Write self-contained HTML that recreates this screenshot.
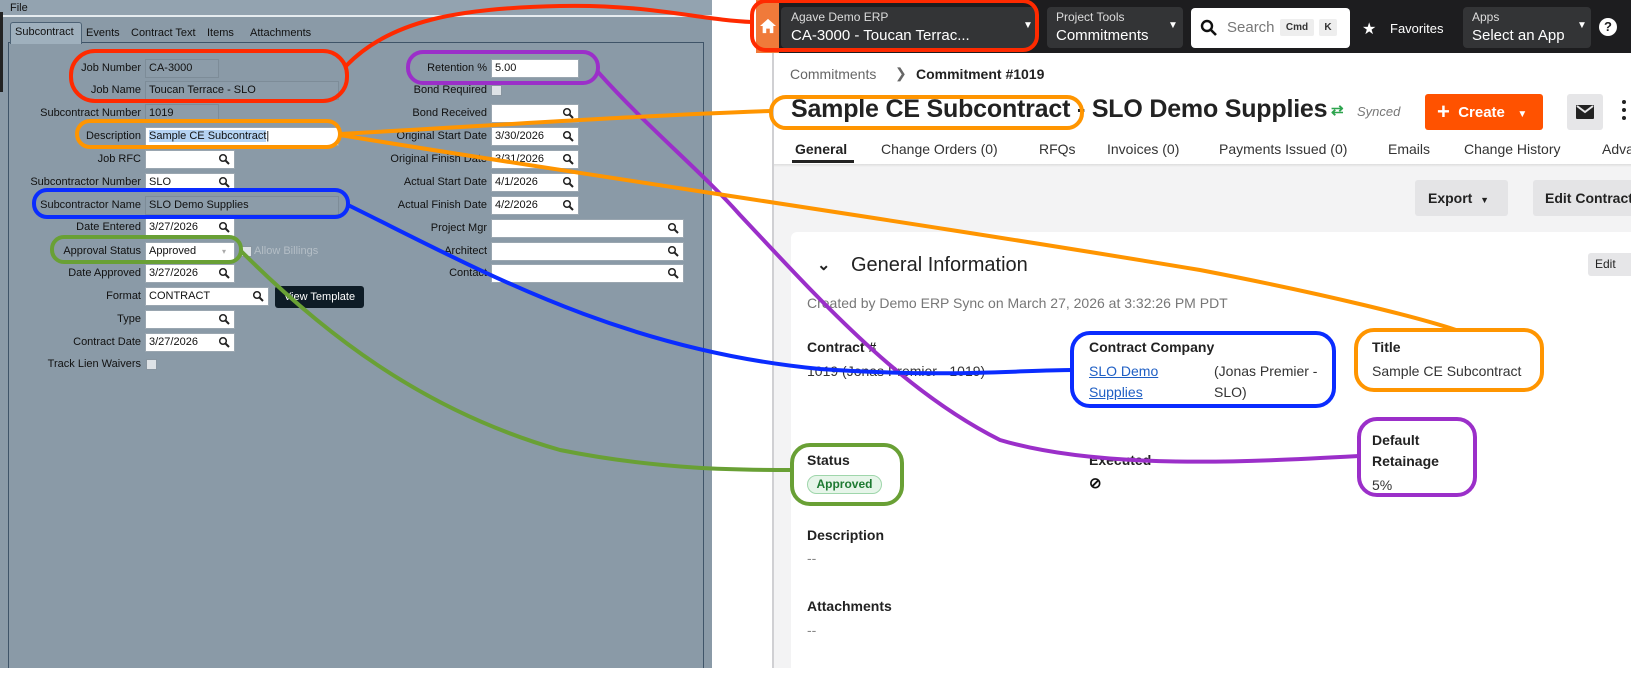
<!DOCTYPE html>
<html><head><meta charset="utf-8"><style>
*{margin:0;padding:0;box-sizing:border-box}
body{width:1631px;height:668px;overflow:hidden;position:relative;background:#fff;font-family:"Liberation Sans",sans-serif}
.a{position:absolute;white-space:nowrap}
#L{position:absolute;left:0;top:0;width:712px;height:668px;background:#8a9aa7;font-size:11px;color:#111}
#F{position:absolute;left:0;top:2px;width:712px;height:668px}
.lb{position:absolute;text-align:right;width:200px;font-size:11px;line-height:19px;color:#111}
.in{position:absolute;height:19px;background:#fff;border:1px solid #9aa6b0;font-size:11px;line-height:17px;padding-left:3px;color:#111}
.ro{background:#8c9ca9;border:1px solid #7d8c98}
.mg{position:absolute;right:4px;top:2px;width:12px;height:12px}
.cb{position:absolute;width:11px;height:11px;background:#dde2e6;border:1px solid #8895a0}
.tab{position:absolute;top:141px;font-size:14px;color:#333}
.h{font-weight:bold;font-size:14px;color:#222}
.v{font-size:14px;color:#333}
</style></head><body>
<div id="L">
 <div class="a" style="left:0;top:0;width:712px;height:17px;background:#93a3b0;border-bottom:2px solid #e6ecf0"></div>
 <div class="a" style="left:10px;top:2px;font-size:11px">File</div>
 <div class="a" style="left:0;top:12px;width:3px;height:80px;background:#222"></div>
 <div class="a" style="left:8px;top:42px;width:696px;height:626px;border:1px solid #3f5468;border-bottom:none;background:#8a9aa7"></div>
 <div class="a" style="left:10px;top:22px;width:72px;height:22px;background:#9fb0bd;border:1px solid #4d6275;border-bottom:none;border-radius:3px 3px 0 0;padding:3px 4px;font-size:11px">Subcontract</div>
 <div class="a" style="left:86px;top:27px;font-size:11px">Events</div>
 <div class="a" style="left:131px;top:27px;font-size:11px">Contract Text</div>
 <div class="a" style="left:207px;top:27px;font-size:11px">Items</div>
 <div class="a" style="left:250px;top:27px;font-size:11px">Attachments</div>
<div id="F">
 <div class="lb" style="left:-59px;top:57px">Job Number</div><div class="in ro" style="left:145px;top:57px;width:74px">CA-3000</div>
 <div class="lb" style="left:-59px;top:79px">Job Name</div><div class="in ro" style="left:145px;top:79px;width:194px">Toucan Terrace - SLO</div>
 <div class="lb" style="left:-59px;top:102px">Subcontract Number</div><div class="in ro" style="left:145px;top:102px;width:74px">1019</div>
 <div class="lb" style="left:-59px;top:125px">Description</div><div class="in" style="left:145px;top:125px;width:194px"><span style="background:#b5d3f3">Sample CE Subcontract</span>|</div>
 <div class="lb" style="left:-59px;top:148px">Job RFC</div><div class="in" style="left:145px;top:148px;width:90px">&nbsp;<svg class="mg" viewBox="0 0 12 12"><circle cx="5" cy="5" r="3.3" fill="none" stroke="#222" stroke-width="1.5"/><path d="M7.5 7.5L11 11" stroke="#222" stroke-width="2"/></svg></div>
 <div class="lb" style="left:-59px;top:171px">Subcontractor Number</div><div class="in" style="left:145px;top:171px;width:90px">SLO<svg class="mg" viewBox="0 0 12 12"><circle cx="5" cy="5" r="3.3" fill="none" stroke="#222" stroke-width="1.5"/><path d="M7.5 7.5L11 11" stroke="#222" stroke-width="2"/></svg></div>
 <div class="lb" style="left:-59px;top:194px">Subcontractor Name</div><div class="in ro" style="left:145px;top:194px;width:194px">SLO Demo Supplies</div>
 <div class="lb" style="left:-59px;top:216px">Date Entered</div><div class="in" style="left:145px;top:216px;width:90px">3/27/2026<svg class="mg" viewBox="0 0 12 12"><circle cx="5" cy="5" r="3.3" fill="none" stroke="#222" stroke-width="1.5"/><path d="M7.5 7.5L11 11" stroke="#222" stroke-width="2"/></svg></div>
 <div class="lb" style="left:-59px;top:240px">Approval Status</div><div class="in" style="left:145px;top:240px;width:90px">Approved<span class="a" style="right:8px;top:0;color:#aaa;font-size:8px">▾</span></div>
 <div class="cb" style="left:241px;top:244px"></div><div class="a" style="left:254px;top:243px;color:#b4bec6;font-size:11px">Allow Billings</div>
 <div class="lb" style="left:-59px;top:262px">Date Approved</div><div class="in" style="left:145px;top:262px;width:90px">3/27/2026<svg class="mg" viewBox="0 0 12 12"><circle cx="5" cy="5" r="3.3" fill="none" stroke="#222" stroke-width="1.5"/><path d="M7.5 7.5L11 11" stroke="#222" stroke-width="2"/></svg></div>
 <div class="lb" style="left:-59px;top:285px">Format</div><div class="in" style="left:145px;top:285px;width:124px">CONTRACT<svg class="mg" viewBox="0 0 12 12"><circle cx="5" cy="5" r="3.3" fill="none" stroke="#222" stroke-width="1.5"/><path d="M7.5 7.5L11 11" stroke="#222" stroke-width="2"/></svg></div>
 <div class="a" style="left:275px;top:284px;width:89px;height:22px;background:#0e1c26;border-radius:3px;color:#fff;font-size:11px;line-height:22px;text-align:center">View Template</div>
 <div class="lb" style="left:-59px;top:308px">Type</div><div class="in" style="left:145px;top:308px;width:90px">&nbsp;<svg class="mg" viewBox="0 0 12 12"><circle cx="5" cy="5" r="3.3" fill="none" stroke="#222" stroke-width="1.5"/><path d="M7.5 7.5L11 11" stroke="#222" stroke-width="2"/></svg></div>
 <div class="lb" style="left:-59px;top:331px">Contract Date</div><div class="in" style="left:145px;top:331px;width:90px">3/27/2026<svg class="mg" viewBox="0 0 12 12"><circle cx="5" cy="5" r="3.3" fill="none" stroke="#222" stroke-width="1.5"/><path d="M7.5 7.5L11 11" stroke="#222" stroke-width="2"/></svg></div>
 <div class="lb" style="left:-59px;top:353px">Track Lien Waivers</div><div class="cb" style="left:146px;top:357px"></div>

 <div class="lb" style="left:287px;top:57px">Retention %</div><div class="in" style="left:491px;top:57px;width:88px">5.00</div>
 <div class="lb" style="left:287px;top:79px">Bond Required</div><div class="cb" style="left:491px;top:83px"></div>
 <div class="lb" style="left:287px;top:102px">Bond Received</div><div class="in" style="left:491px;top:102px;width:88px">&nbsp;<svg class="mg" viewBox="0 0 12 12"><circle cx="5" cy="5" r="3.3" fill="none" stroke="#222" stroke-width="1.5"/><path d="M7.5 7.5L11 11" stroke="#222" stroke-width="2"/></svg></div>
 <div class="lb" style="left:287px;top:125px">Original Start Date</div><div class="in" style="left:491px;top:125px;width:88px">3/30/2026<svg class="mg" viewBox="0 0 12 12"><circle cx="5" cy="5" r="3.3" fill="none" stroke="#222" stroke-width="1.5"/><path d="M7.5 7.5L11 11" stroke="#222" stroke-width="2"/></svg></div>
 <div class="lb" style="left:287px;top:148px">Original Finish Date</div><div class="in" style="left:491px;top:148px;width:88px">3/31/2026<svg class="mg" viewBox="0 0 12 12"><circle cx="5" cy="5" r="3.3" fill="none" stroke="#222" stroke-width="1.5"/><path d="M7.5 7.5L11 11" stroke="#222" stroke-width="2"/></svg></div>
 <div class="lb" style="left:287px;top:171px">Actual Start Date</div><div class="in" style="left:491px;top:171px;width:88px">4/1/2026<svg class="mg" viewBox="0 0 12 12"><circle cx="5" cy="5" r="3.3" fill="none" stroke="#222" stroke-width="1.5"/><path d="M7.5 7.5L11 11" stroke="#222" stroke-width="2"/></svg></div>
 <div class="lb" style="left:287px;top:194px">Actual Finish Date</div><div class="in" style="left:491px;top:194px;width:88px">4/2/2026<svg class="mg" viewBox="0 0 12 12"><circle cx="5" cy="5" r="3.3" fill="none" stroke="#222" stroke-width="1.5"/><path d="M7.5 7.5L11 11" stroke="#222" stroke-width="2"/></svg></div>
 <div class="lb" style="left:287px;top:217px">Project Mgr</div><div class="in" style="left:491px;top:217px;width:193px">&nbsp;<svg class="mg" viewBox="0 0 12 12"><circle cx="5" cy="5" r="3.3" fill="none" stroke="#222" stroke-width="1.5"/><path d="M7.5 7.5L11 11" stroke="#222" stroke-width="2"/></svg></div>
 <div class="lb" style="left:287px;top:240px">Architect</div><div class="in" style="left:491px;top:240px;width:193px">&nbsp;<svg class="mg" viewBox="0 0 12 12"><circle cx="5" cy="5" r="3.3" fill="none" stroke="#222" stroke-width="1.5"/><path d="M7.5 7.5L11 11" stroke="#222" stroke-width="2"/></svg></div>
 <div class="lb" style="left:287px;top:262px">Contact</div><div class="in" style="left:491px;top:262px;width:193px">&nbsp;<svg class="mg" viewBox="0 0 12 12"><circle cx="5" cy="5" r="3.3" fill="none" stroke="#222" stroke-width="1.5"/><path d="M7.5 7.5L11 11" stroke="#222" stroke-width="2"/></svg></div>
</div>
</div>

<!-- right side -->
<div class="a" style="left:772px;top:0;width:2px;height:668px;background:#d0d0d3"></div>
<div class="a" style="left:774px;top:166px;width:857px;height:502px;background:#f3f3f4"></div>
<div class="a" style="left:756px;top:0;width:875px;height:53px;background:#1d1d1f"></div>
<div class="a" style="left:756px;top:0;width:23px;height:53px;background:#f07a3a"></div>
<svg class="a" style="left:759px;top:18px" width="18" height="16" viewBox="0 0 20 18"><path d="M10 1L1 9h3v8h4v-5h4v5h4V9h3z" fill="#fff"/></svg>
<div class="a" style="left:781px;top:7px;width:254px;height:41px;background:#333436;border-radius:4px"></div>
<div class="a" style="left:791px;top:10px;color:#ddd;font-size:12px">Agave Demo ERP</div>
<div class="a" style="left:791px;top:27px;color:#fff;font-size:15px">CA-3000 - Toucan Terrac...</div>
<div class="a" style="left:1023px;top:20px;color:#fff;font-size:10px">▼</div>
<div class="a" style="left:1047px;top:7px;width:136px;height:41px;background:#333436;border-radius:4px"></div>
<div class="a" style="left:1056px;top:10px;color:#ddd;font-size:12px">Project Tools</div>
<div class="a" style="left:1056px;top:27px;color:#fff;font-size:15px">Commitments</div>
<div class="a" style="left:1168px;top:20px;color:#fff;font-size:10px">▼</div>
<div class="a" style="left:1191px;top:8px;width:159px;height:40px;background:#fff;border-radius:4px"></div>
<svg class="a" style="left:1200px;top:19px" width="18" height="18" viewBox="0 0 18 18"><circle cx="7" cy="7" r="5" fill="none" stroke="#111" stroke-width="2.4"/><path d="M11 11l5 5" stroke="#111" stroke-width="2.6"/></svg>
<div class="a" style="left:1227px;top:19px;color:#777;font-size:15px">Search</div>
<div class="a" style="left:1280px;top:19px;width:34px;height:17px;background:#eee;border-radius:2px;font-size:10px;font-weight:bold;text-align:center;line-height:17px;color:#333">Cmd</div>
<div class="a" style="left:1319px;top:19px;width:18px;height:17px;background:#eee;border-radius:2px;font-size:10px;font-weight:bold;text-align:center;line-height:17px;color:#333">K</div>
<div class="a" style="left:1362px;top:19px;color:#fff;font-size:16px">★</div>
<div class="a" style="left:1390px;top:21px;color:#fff;font-size:13px">Favorites</div>
<div class="a" style="left:1463px;top:7px;width:128px;height:41px;background:#333436;border-radius:4px"></div>
<div class="a" style="left:1472px;top:10px;color:#ddd;font-size:12px">Apps</div>
<div class="a" style="left:1472px;top:27px;color:#fff;font-size:15px">Select an App</div>
<div class="a" style="left:1577px;top:20px;color:#fff;font-size:10px">▼</div>
<div class="a" style="left:1599px;top:18px;width:18px;height:18px;border-radius:50%;background:#fff;color:#1d1d1f;font-weight:bold;font-size:13px;text-align:center;line-height:18px">?</div>

<div class="a" style="left:790px;top:66px;color:#666;font-size:14px">Commitments</div>
<div class="a" style="left:895px;top:65px;color:#666;font-size:14px">❯</div>
<div class="a" style="left:916px;top:66px;color:#222;font-size:14px;font-weight:bold">Commitment #1019</div>
<div class="a" style="left:791px;top:95px;color:#222;font-size:25px;font-weight:bold;letter-spacing:-0.2px">Sample CE Subcontract - SLO Demo Supplies</div>
<div class="a" style="left:1331px;top:101px;color:#2da44e;font-size:15px;font-weight:bold">⇄</div>
<div class="a" style="left:1357px;top:104px;color:#777;font-size:13px;font-style:italic">Synced</div>
<div class="a" style="left:1425px;top:94px;width:118px;height:36px;background:#ff5200;border-radius:3px;color:#fff;font-weight:bold;font-size:15px;line-height:36px;padding-left:12px"><span style="font-size:22px;vertical-align:-2px">+</span>&nbsp; Create &nbsp;&nbsp;<span style="font-size:10px">▼</span></div>
<div class="a" style="left:1567px;top:94px;width:36px;height:36px;background:#e6e6e8;border-radius:3px"></div>
<svg class="a" style="left:1576px;top:105px" width="18" height="14" viewBox="0 0 18 14"><rect width="18" height="14" rx="1" fill="#222"/><path d="M1 1l8 6 8-6" fill="none" stroke="#e6e6e8" stroke-width="2"/></svg>
<div class="a" style="left:1622px;top:100px;width:4px;height:4px;background:#222;border-radius:50%;box-shadow:0 8px 0 #222,0 16px 0 #222"></div>

<div class="tab" style="left:795px;color:#222;font-weight:bold">General</div>
<div class="a" style="left:792px;top:160px;width:62px;height:3px;background:#222"></div>
<div class="tab" style="left:881px">Change Orders (0)</div>
<div class="tab" style="left:1039px">RFQs</div>
<div class="tab" style="left:1107px">Invoices (0)</div>
<div class="tab" style="left:1219px">Payments Issued (0)</div>
<div class="tab" style="left:1388px">Emails</div>
<div class="tab" style="left:1464px">Change History</div>
<div class="tab" style="left:1602px">Adva</div>
<div class="a" style="left:774px;top:164px;width:857px;height:3px;background:linear-gradient(#ddd,#f3f3f4)"></div>

<div class="a" style="left:1415px;top:180px;width:93px;height:36px;background:#e4e4e6;border-radius:3px;font-size:14px;font-weight:bold;color:#222;line-height:36px;padding-left:13px">Export &nbsp;<span style="font-size:9px">▼</span></div>
<div class="a" style="left:1533px;top:180px;width:110px;height:36px;background:#e4e4e6;border-radius:3px;font-size:14px;font-weight:bold;color:#222;line-height:36px;padding-left:12px">Edit Contract</div>

<div class="a" style="left:791px;top:232px;width:850px;height:450px;background:#fff;border-radius:6px"></div>
<div class="a" style="left:817px;top:255px;font-size:16px;color:#222;font-weight:bold">⌄</div>
<div class="a" style="left:851px;top:254px;font-size:20px;color:#222">General Information</div>
<div class="a" style="left:1588px;top:253px;width:50px;height:23px;background:#e6e6e8;border-radius:3px;font-size:12px;color:#222;line-height:23px;padding-left:7px">Edit</div>
<div class="a" style="left:807px;top:295px;font-size:14px;color:#777">Created by Demo ERP Sync on March 27, 2026 at 3:32:26 PM PDT</div>

<div class="a h" style="left:807px;top:339px">Contract #</div>
<div class="a v" style="left:807px;top:363px">1019 (Jonas Premier - 1019)</div>
<div class="a h" style="left:1089px;top:339px">Contract Company</div>
<div class="a v" style="left:1089px;top:363px;color:#1f5fc4;text-decoration:underline">SLO Demo</div>
<div class="a v" style="left:1089px;top:384px;color:#1f5fc4;text-decoration:underline">Supplies</div>
<div class="a v" style="left:1214px;top:363px">(Jonas Premier -</div>
<div class="a v" style="left:1214px;top:384px">SLO)</div>
<div class="a h" style="left:1372px;top:339px">Title</div>
<div class="a v" style="left:1372px;top:363px">Sample CE Subcontract</div>
<div class="a h" style="left:1372px;top:432px">Default</div>
<div class="a h" style="left:1372px;top:453px">Retainage</div>
<div class="a v" style="left:1372px;top:477px">5%</div>
<div class="a h" style="left:807px;top:452px">Status</div>
<div class="a" style="left:807px;top:475px;width:75px;height:19px;background:#e6f5e9;border:1px solid #9fd6ab;border-radius:10px;color:#1e7a32;font-size:12px;font-weight:bold;text-align:center;line-height:17px">Approved</div>
<div class="a h" style="left:1089px;top:452px">Executed</div>
<div class="a" style="left:1089px;top:474px;font-size:15px;font-weight:bold;color:#111">⊘</div>
<div class="a h" style="left:807px;top:527px">Description</div>
<div class="a" style="left:807px;top:550px;color:#888;font-size:14px">--</div>
<div class="a h" style="left:807px;top:598px">Attachments</div>
<div class="a" style="left:807px;top:622px;color:#888;font-size:14px">--</div>

<svg class="a" style="left:0;top:0" width="1631" height="668" viewBox="0 0 1631 668" fill="none" stroke-width="4">
 <g stroke="#ff2a00">
  <rect x="71" y="51" width="276" height="50" rx="24"/>
  <rect x="752" y="1" width="285" height="49" rx="14"/>
  <path d="M346,66 C390,20 460,8 560,6 C650,4 700,20 752,22"/>
 </g>
 <g stroke="#9b2fc9">
  <rect x="408" y="52" width="190" height="31" rx="15"/>
  <rect x="1359" y="419" width="116" height="76" rx="18"/>
  <path d="M598,72 C650,130 700,170 740,215 C820,300 900,390 1000,440 C1100,470 1250,462 1359,456"/>
 </g>
 <g stroke="#ff9500">
  <rect x="77" y="121" width="263" height="26" rx="13"/>
  <rect x="771" y="97" width="311" height="31" rx="15"/>
  <rect x="1356" y="330" width="186" height="60" rx="18"/>
  <path d="M340,134 C500,125 650,115 771,111"/>
  <path d="M340,135 C550,170 900,220 1200,270 C1330,295 1420,318 1456,330"/>
 </g>
 <g stroke="#0a2cff">
  <rect x="34" y="190" width="314" height="27" rx="13"/>
  <rect x="1072" y="333" width="262" height="73" rx="18"/>
  <path d="M348,205 C480,270 620,350 820,369 C950,378 1020,370 1072,370"/>
 </g>
 <g stroke="#69a035">
  <rect x="52" y="237" width="189" height="25" rx="12"/>
  <rect x="792" y="445" width="110" height="59" rx="18"/>
  <path d="M241,251 C320,330 420,410 560,450 C660,470 740,470 792,470"/>
 </g>
</svg>
</body></html>
